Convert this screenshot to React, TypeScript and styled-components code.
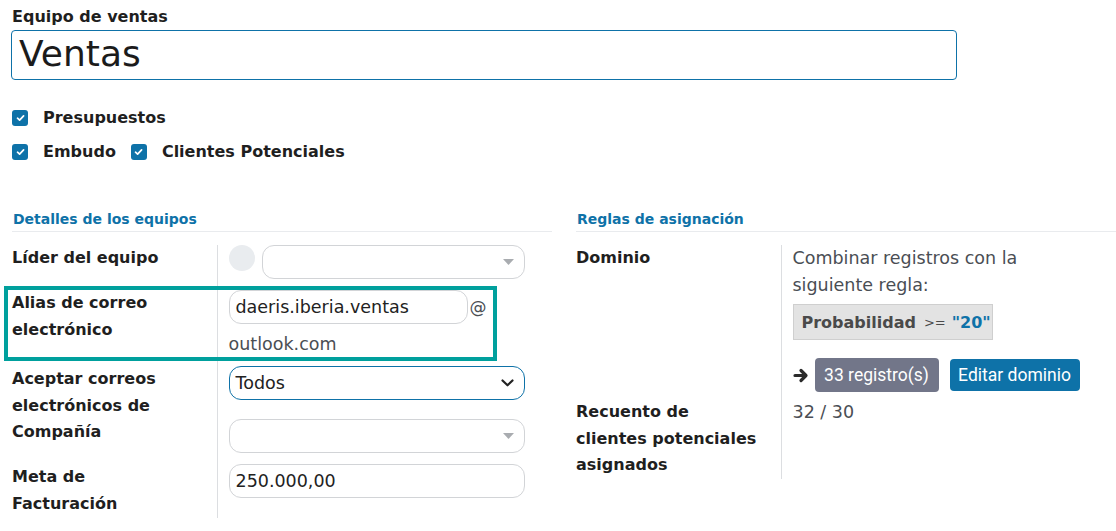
import React from 'react';
import styled, { createGlobalStyle } from 'styled-components';

const Global = createGlobalStyle`
  html, body { margin: 0; padding: 0; background: #ffffff; overflow: hidden; }
  body { font-family: "DejaVu Sans", "Noto Sans", sans-serif; color: #1f1f1f; }
  * { box-sizing: border-box; }
`;

const BLUE = '#0e72a8';
const TEAL = '#00a09d';

const Page = styled.div`
  width: 1116px;
  height: 531px;
  overflow: hidden;
  padding: 3px 0 0 12px;
`;

const TitleLabel = styled.div`
  font-weight: 700;
  font-size: 16px;
  line-height: 27px;
  color: #1f1f1f;
`;

const NameBox = styled.div`
  margin-left: -1px;
  width: 946px;
  height: 50px;
  border: 1.5px solid ${BLUE};
  border-radius: 4px;
  font-size: 36px;
  line-height: 46px;
  padding-left: 7px;
  color: #1b1b1b;
`;

const Checks = styled.div`
  margin-top: 24px;
  display: flex;
  flex-direction: column;
  gap: 7px;
`;

const CheckLine = styled.div`
  display: flex;
  align-items: center;
  height: 27px;
`;

const CheckItem = styled.label`
  display: inline-flex;
  align-items: center;
  gap: 15px;
  margin-right: 15px;
  font-weight: 700;
  font-size: 16px;
  color: #1f1f1f;
`;

const Box = styled.span`
  width: 16px;
  height: 16px;
  border-radius: 3px;
  background: ${BLUE};
  display: inline-flex;
  align-items: center;
  justify-content: center;
`;

const Check = ({ label }: { label: string }) => (
  <CheckItem>
    <Box>
      <svg width="9" height="8" viewBox="0 0 9 8">
        <path d="M1.5 4.2 L3.6 6.1 L7.6 1.8" fill="none" stroke="#fff" strokeWidth="1.7" strokeLinecap="round" strokeLinejoin="round" />
      </svg>
    </Box>
    {label}
  </CheckItem>
);

const Sections = styled.div`
  margin-top: 42px;
  display: grid;
  grid-template-columns: 540px 540px;
  column-gap: 24px;
`;

const SectionTitle = styled.div`
  font-weight: 700;
  font-size: 14px;
  line-height: 24px;
  color: ${BLUE};
  padding-left: 1px;
  border-bottom: 1px solid #e9ebee;
`;

const FieldGrid = styled.div`
  margin-top: 13px;
  display: grid;
  grid-template-columns: 205px 1fr;
  position: relative;
`;

const Label = styled.div`
  font-weight: 700;
  font-size: 16px;
  line-height: 26.7px;
  color: #1f1f1f;
  position: relative;
`;

const Value = styled.div<{ $pb?: number }>`
  border-left: 1.5px solid #dcdee1;
  padding: 0 0 ${(p) => p.$pb ?? 11}px 10.5px;
  font-size: 17.5px;
  color: #45494f;
`;

const Highlight = styled.div`
  position: absolute;
  left: -8px;
  top: -4px;
  width: 493px;
  height: 75px;
  border: 4px solid ${TEAL};
  pointer-events: none;
`;

const InlineRow = styled.div`
  display: flex;
  align-items: center;
`;

const Avatar = styled.span`
  width: 26px;
  height: 26px;
  border-radius: 50%;
  background: #e9ecef;
  margin-right: 7px;
  align-self: flex-start;
`;

const Input = styled.div<{ $w?: number; $focus?: boolean }>`
  width: ${(p) => p.$w ?? 296}px;
  height: 34px;
  border: 1px solid ${(p) => (p.$focus ? BLUE : '#d2d4d7')};
  border-radius: 12px;
  padding: 0 10px 0 6px;
  display: flex;
  align-items: center;
  justify-content: space-between;
  font-size: 17.5px;
  color: #222;
`;

const At = styled.span`
  font-size: 17px;
  color: #4a4e54;
  margin-left: 2px;
`;

const Domain = styled.div<{ $mt?: number }>`
  margin-top: ${(p) => p.$mt ?? 0}px;
  font-size: 17.5px;
  line-height: 27px;
  color: #4a4e54;
`;

const Rule = styled.div`
  margin-top: 5px;
  display: inline-flex;
  align-items: center;
  width: 200px;
  height: 36px;
  background: #e3e3e3;
  border: 1px solid #cfcfcf;
  padding-left: 8px;
  gap: 6px;
`;

const RuleField = styled.span`
  font-weight: 700;
  font-size: 16px;
  color: #4a4a4a;
`;

const RuleOp = styled.span`
  font-size: 13px;
  color: #4a4a4a;
  margin-left: 2px;
`;

const RuleVal = styled.span`
  font-weight: 700;
  font-size: 16px;
  color: ${BLUE};
`;

const Buttons = styled.div`
  margin-top: 18px;
  display: flex;
  align-items: center;
`;

const Btn = styled.span<{ $bg: string; $w: number; $h: number }>`
  display: inline-flex;
  align-items: center;
  justify-content: center;
  width: ${(p) => p.$w}px;
  height: ${(p) => p.$h}px;
  background: ${(p) => p.$bg};
  border-radius: 4px;
  color: #fff;
  font-family: Roboto, "Liberation Sans", sans-serif;
  font-size: 17.5px;
  margin-right: 11px;
`;

const Caret = () => (
  <svg width="11" height="6" viewBox="0 0 11 6">
    <path d="M0 0 H11 L5.5 6 Z" fill="#a9acb0" />
  </svg>
);

const Chevron = () => (
  <svg width="13" height="8" viewBox="0 0 13 8">
    <path d="M1.5 1.5 L6.5 6.3 L11.5 1.5" fill="none" stroke="#222" strokeWidth="2.2" strokeLinecap="round" strokeLinejoin="round" />
  </svg>
);

const Arrow = () => (
  <svg width="16" height="15" viewBox="0 0 16 15" style={{ marginRight: 6 }}>
    <path d="M2 7.5 H12.5 M8 2.5 L13 7.5 L8 12.5" fill="none" stroke="#2b2b2b" strokeWidth="3.2" strokeLinecap="round" strokeLinejoin="round" />
  </svg>
);

export default function App() {
  return (
    <Page>
      <Global />
      <TitleLabel>Equipo de ventas</TitleLabel>
      <NameBox>Ventas</NameBox>
      <Checks>
        <CheckLine>
          <Check label="Presupuestos" />
        </CheckLine>
        <CheckLine>
          <Check label="Embudo" />
          <Check label="Clientes Potenciales" />
        </CheckLine>
      </Checks>
      <Sections>
        <div>
          <SectionTitle>Detalles de los equipos</SectionTitle>
          <FieldGrid>
            <Label>Líder del equipo</Label>
            <Value>
              <InlineRow>
                <Avatar />
                <Input $w={263}>
                  <span />
                  <Caret />
                </Input>
              </InlineRow>
            </Value>

            <Label>
              <Highlight />
              Alias de correo
              <br />
              electrónico
            </Label>
            <Value $pb={8}>
              <InlineRow>
                <Input $w={239}>daeris.iberia.ventas</Input>
                <At>@</At>
              </InlineRow>
              <Domain $mt={7}>outlook.com</Domain>
            </Value>

            <Label>
              Aceptar correos
              <br />
              electrónicos de
            </Label>
            <Value>
              <Input $focus>
                Todos
                <Chevron />
              </Input>
            </Value>

            <Label>Compañía</Label>
            <Value>
              <Input>
                <span />
                <Caret />
              </Input>
            </Value>

            <Label>
              Meta de
              <br />
              Facturación
            </Label>
            <Value $pb={0}>
              <Input>250.000,00</Input>
            </Value>
          </FieldGrid>
        </div>

        <div>
          <SectionTitle>Reglas de asignación</SectionTitle>
          <FieldGrid>
            <Label>Dominio</Label>
            <Value $pb={7}>
              <Domain>
                Combinar registros con la
                <br />
                siguiente regla:
              </Domain>
              <Rule>
                <RuleField>Probabilidad</RuleField>
                <RuleOp>&gt;=</RuleOp>
                <RuleVal>"20"</RuleVal>
              </Rule>
              <Buttons>
                <Arrow />
                <Btn $bg="#727689" $w={124} $h={34}>33 registro(s)</Btn>
                <Btn $bg={BLUE} $w={130} $h={32}>Editar dominio</Btn>
              </Buttons>
            </Value>

            <Label>
              Recuento de
              <br />
              clientes potenciales
              <br />
              asignados
            </Label>
            <Value $pb={0}>
              <Domain>32 / 30</Domain>
            </Value>
          </FieldGrid>
        </div>
      </Sections>
    </Page>
  );
}
